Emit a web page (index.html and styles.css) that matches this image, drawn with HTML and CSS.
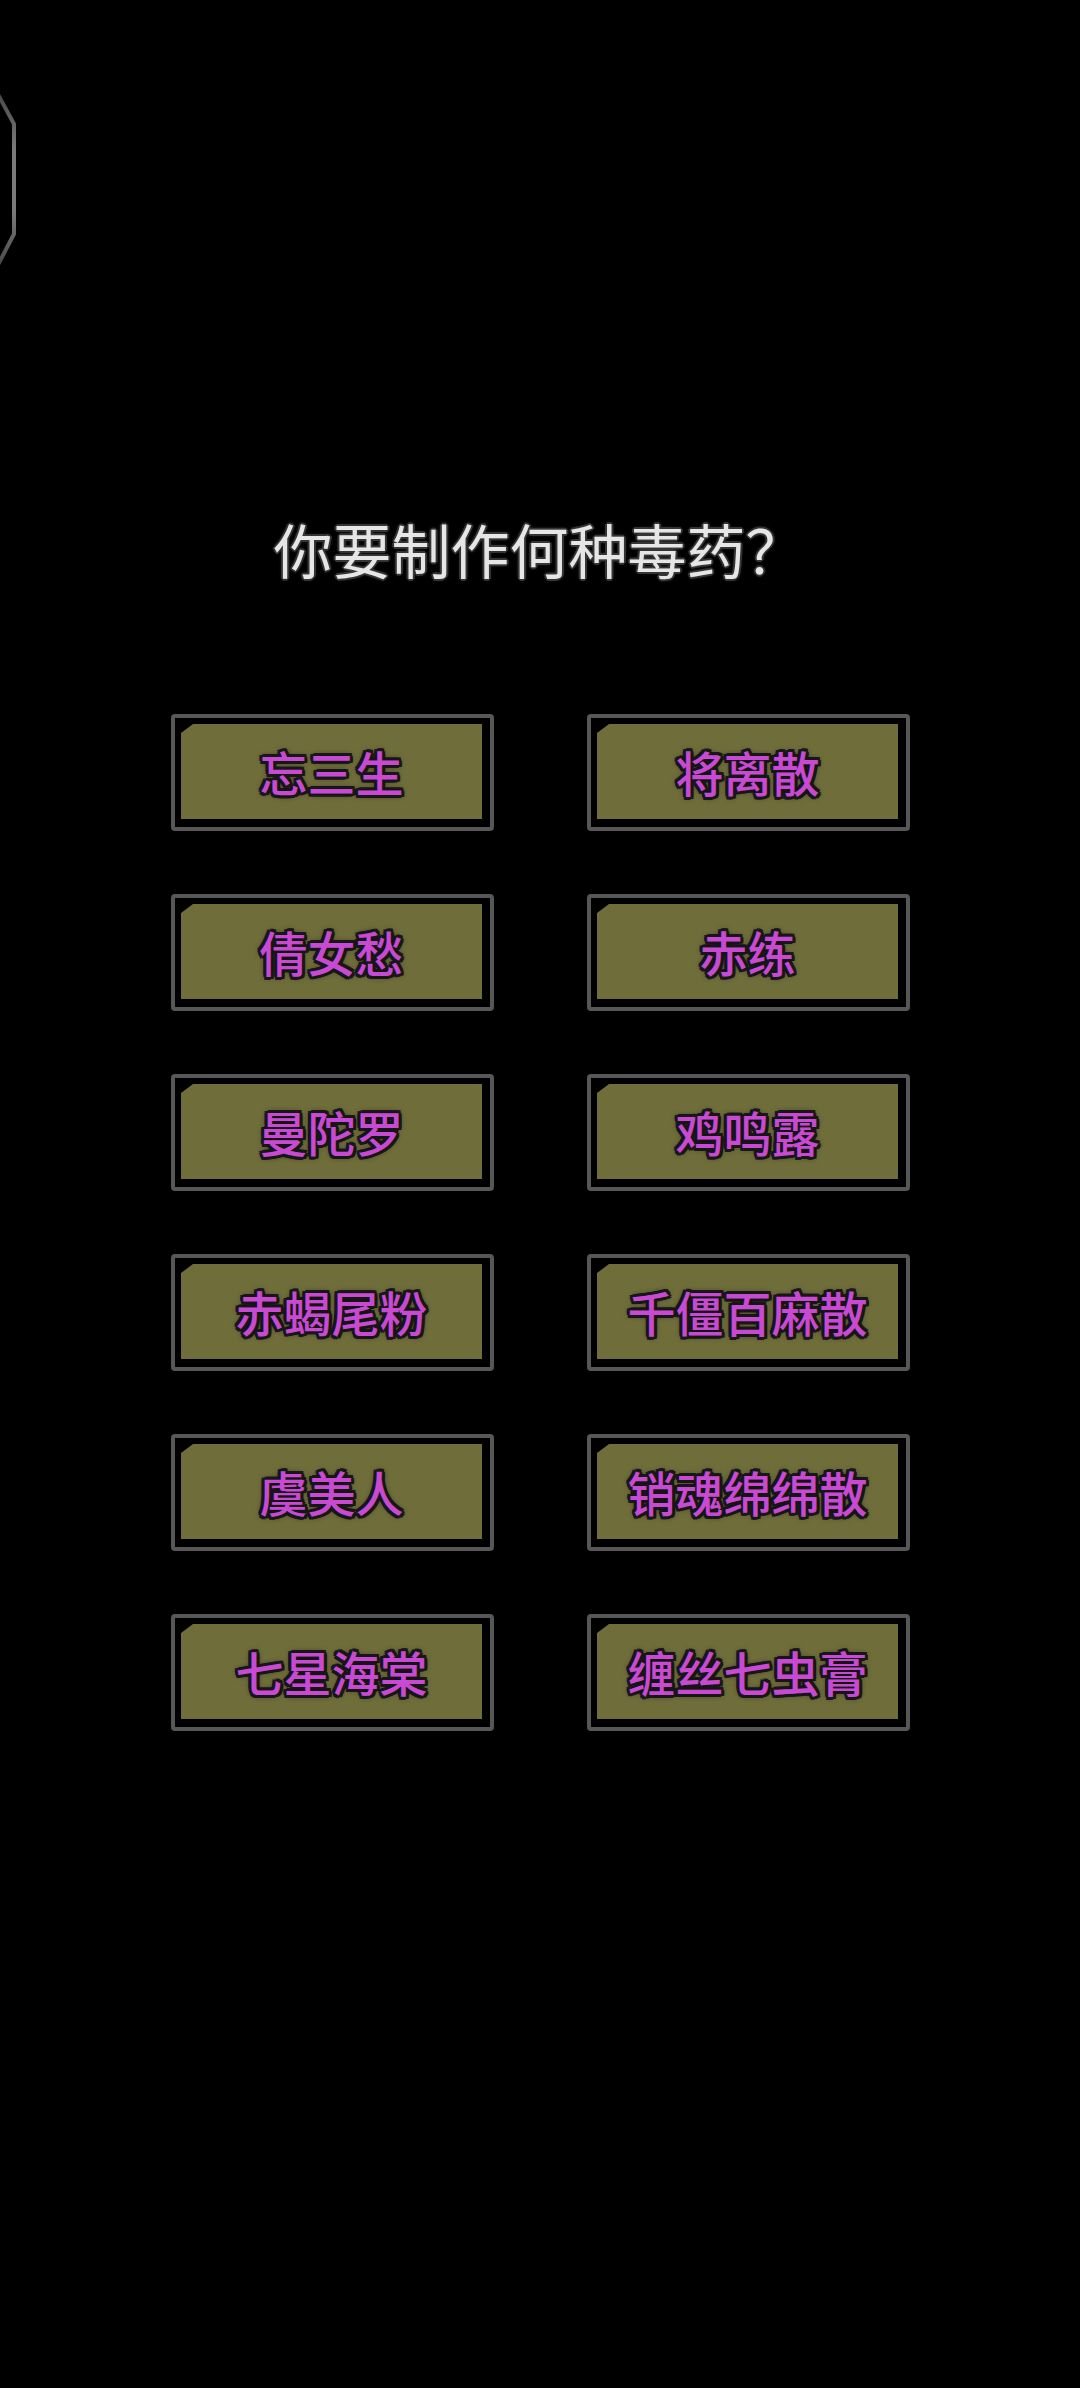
FILE: index.html
```html
<!DOCTYPE html>
<html lang="zh-CN">
<head>
<meta charset="utf-8">
<title>毒药</title>
<link rel="stylesheet" href="styles.css">
</head>
<body>
<div class="screen">
  <svg class="octagon" width="40" height="300" viewBox="0 0 40 300" aria-hidden="true">
    <defs>
      <linearGradient id="og" x1="0" y1="0" x2="0" y2="1">
        <stop offset="0" stop-color="#3a3a3a"/>
        <stop offset="0.35" stop-color="#7a7a7a"/>
        <stop offset="0.65" stop-color="#7a7a7a"/>
        <stop offset="1" stop-color="#3a3a3a"/>
      </linearGradient>
    </defs>
    <path d="M-12,76 L14,124 L14,234 L-12,284" fill="none" stroke="url(#og)" stroke-width="4" stroke-linejoin="round"/>
  </svg>

  <h1 class="title">你要制作何种毒药？</h1>

  <div class="grid">
    <button class="btn"><span class="face">忘三生</span></button>
    <button class="btn"><span class="face">将离散</span></button>
    <button class="btn"><span class="face">倩女愁</span></button>
    <button class="btn"><span class="face">赤练</span></button>
    <button class="btn"><span class="face">曼陀罗</span></button>
    <button class="btn"><span class="face">鸡鸣露</span></button>
    <button class="btn"><span class="face">赤蝎尾粉</span></button>
    <button class="btn"><span class="face">千僵百麻散</span></button>
    <button class="btn"><span class="face">虞美人</span></button>
    <button class="btn"><span class="face">销魂绵绵散</span></button>
    <button class="btn"><span class="face">七星海棠</span></button>
    <button class="btn"><span class="face">缠丝七虫膏</span></button>
  </div>
</div>
</body>
</html>
```

FILE: styles.css
```css
html, body {
  margin: 0;
  padding: 0;
  background: #000;
}

.screen {
  position: relative;
  width: 1080px;
  height: 2388px;
  background: #000;
  overflow: hidden;
  padding-top: 514px;
  box-sizing: border-box;
  font-family: "Noto Sans CJK SC", "Noto Sans", sans-serif;
}

.octagon {
  position: absolute;
  left: 0;
  top: 0;
}

.title {
  margin: 0;
  padding-right: 2px;
  height: 70px;
  line-height: 70px;
  font-size: 59px;
  font-weight: 400;
  text-align: center;
  color: #e6e6e6;
  text-shadow:
    0 0 4px #3a3a3a,
    2px 0 0 #333, -2px 0 0 #333, 0 2px 0 #333, 0 -2px 0 #333,
    1px 1px 0 #333, -1px -1px 0 #333, 1px -1px 0 #333, -1px 1px 0 #333;
}

.grid {
  margin-top: 130px;
  display: grid;
  grid-template-columns: 323px 323px;
  grid-auto-rows: 117px;
  column-gap: 93px;
  row-gap: 63px;
  justify-content: center;
  padding-left: 1px;
}

.btn {
  box-sizing: border-box;
  width: 323px;
  height: 117px;
  margin: 0;
  padding: 6px 8px 8px 6px;
  border: 4px solid #575757;
  border-radius: 4px;
  background: #000;
  display: flex;
  cursor: pointer;
}

.face {
  flex: 1;
  display: flex;
  align-items: center;
  justify-content: center;
  background: #6f6d3a;
  clip-path: polygon(12px 0, 100% 0, 100% 100%, 0 100%, 0 9px);
  font-family: "Noto Sans CJK SC", "Noto Sans", sans-serif;
  font-size: 48px;
  font-weight: 500;
  line-height: 1;
  color: #c84ad2;
  padding-bottom: 2px;
  text-shadow:
    0 0 6px #111,
    3px 0 0 #1a1a1a, -3px 0 0 #1a1a1a, 0 3px 0 #1a1a1a, 0 -3px 0 #1a1a1a,
    2px 2px 0 #1a1a1a, -2px -2px 0 #1a1a1a, 2px -2px 0 #1a1a1a, -2px 2px 0 #1a1a1a,
    3px 2px 0 #1a1a1a, -3px -2px 0 #1a1a1a, 2px -3px 0 #1a1a1a, -2px 3px 0 #1a1a1a;
}
```
